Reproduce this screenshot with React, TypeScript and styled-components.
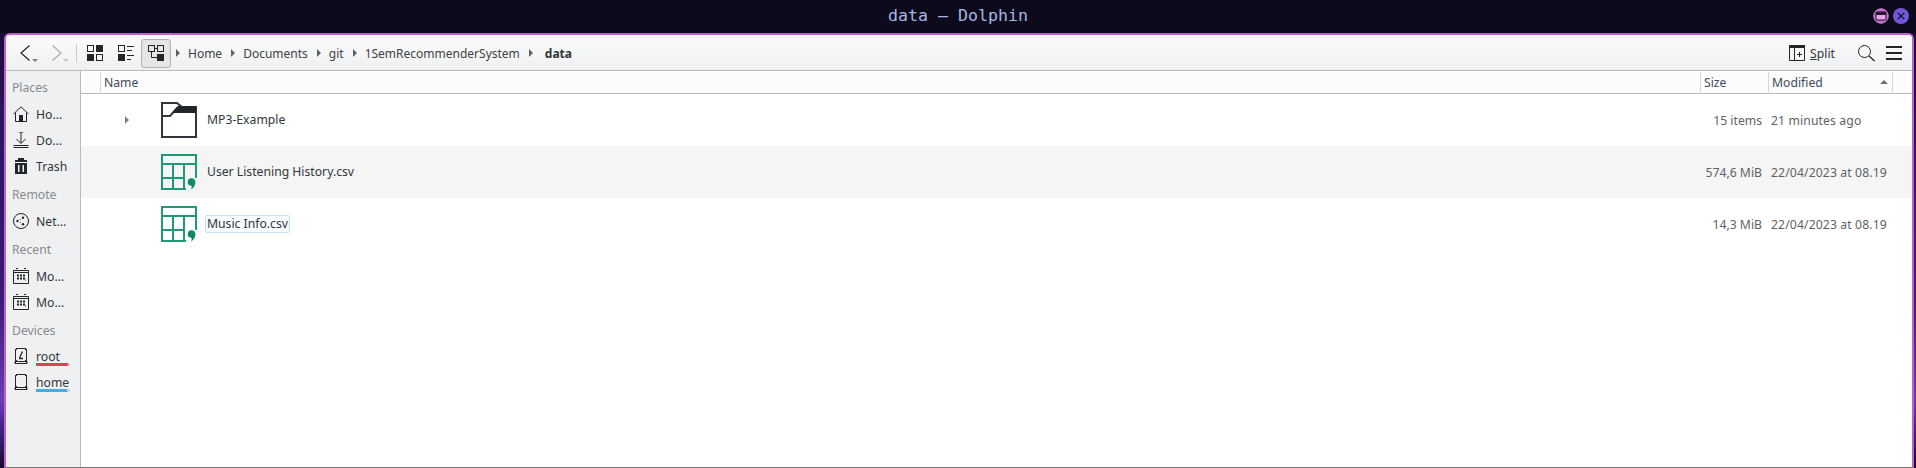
import React from "react";
import styled, { createGlobalStyle } from "styled-components";

const Global = createGlobalStyle`
  html, body { margin: 0; padding: 0; height: 468px; overflow: hidden; background: #0d0a1c; }
  #root { height: 468px; }
  * { box-sizing: border-box; }
`;

const Desktop = styled.div`
  width: 1916px; height: 468px; display: flex; flex-direction: column;
  background: linear-gradient(#1c0d3a 33px, #2c1460 120px, #3a1a78 300px, #6a3fb0 400px, #45258c 425px, #1a0a30 468px);
  font-family: "Noto Sans", sans-serif; font-size: 12.2px; color: #232629;
`;
const TitleBar = styled.header`
  height: 33px; flex: none; display: flex; align-items: center; justify-content: center; position: relative;
  background: #0d0a1c; color: #a9b6e0; font-family: "DejaVu Sans Mono", monospace; font-size: 16.6px; padding-bottom: 3px;
`;
const TitleButtons = styled.div`
  position: absolute; right: 7px; top: 8px; display: flex; gap: 4px;
`;
const Frame = styled.div`
  flex: 1; min-height: 0; margin: 0 2px 0 4px; display: flex; flex-direction: column;
  background: #eff0f1; border: 2px solid #c061cb; border-bottom: 1px solid #777; border-radius: 6px 6px 0 0;
  overflow: hidden;
`;
const Toolbar = styled.div`
  height: 36px; flex: none; display: flex; align-items: center; padding: 1px 0 0 12px;
  background: linear-gradient(#fcfcfc, #eff0f1); border-bottom: 1px solid #b8babb;
`;
const NavBtn = styled.div<{ $w: number }>`
  width: ${(p) => p.$w}px; height: 28px; flex: none; display: flex; align-items: center; padding-left: 2px;
`;
const IconBtn = styled.div<{ $w?: number; $active?: boolean }>`
  width: ${(p) => p.$w ?? 30}px; height: ${(p) => (p.$active ? 29 : 28)}px; flex: none; display: flex; align-items: center; justify-content: center;
  border-radius: 3px;
  ${(p) => p.$active && "background:#e3e5e6;border:1px solid #b0b2b3;"}
`;
const Separator = styled.div`
  width: 1px; height: 18px; background: #c8cacb; margin-right: 2px; flex: none;
`;
const Crumbs = styled.nav`
  display: flex; align-items: center; flex: 1; padding-left: 5px; font-size: 12px;
`;
const Crumb = styled.span<{ $bold?: boolean }>`
  margin-right: 9px;
  font-weight: ${(p) => (p.$bold ? 700 : 400)}; color: ${(p) => (p.$bold ? "#31363b" : "#3f4347")};
`;
const Arrow = styled.span<{ $gap?: number }>`
  width: 0; height: 0; border-left: 4px solid #5c6063; border-top: 4px solid transparent; border-bottom: 4px solid transparent;
  margin-right: ${(p) => p.$gap ?? 8}px; flex: none;
`;
const Tools = styled.div`
  display: flex; align-items: center;
`;
const SplitBtn = styled.div`
  display: flex; align-items: center; gap: 5px; margin-right: 21px; color: #31363b;
`;
const Body = styled.div`
  flex: 1; min-height: 0; display: flex;
`;
const Sidebar = styled.aside`
  width: 75px; flex: none; background: #eff0f1; border-right: 1px solid #b8babb; padding-top: 8px;
`;
const SectionLabel = styled.div<{ $mt?: number; $mb?: number }>`
  height: 18px; line-height: 18px; padding-left: 6px; color: #868a8e;
  margin-top: ${(p) => p.$mt ?? 0}px; margin-bottom: ${(p) => p.$mb ?? 4}px;
`;
const Place = styled.div`
  height: 26px; display: flex; align-items: center; gap: 7px; padding-left: 7px; color: #31363b; position: relative;
`;
const Usage = styled.div`
  position: absolute; left: 30px; top: 20px; width: 34px; height: 3px; background: #d0d2d4;
`;
const UsageFill = styled.div<{ $c: string; $w: number }>`
  height: 3px; width: ${(p) => p.$w}px; background: ${(p) => p.$c};
`;
const Main = styled.main`
  flex: 1; min-width: 0; background: #fff; display: flex; flex-direction: column;
`;
const HeaderRow = styled.div`
  height: 22px; flex: none; display: grid; grid-template-columns: 20px 1fr 68px 124px 19px;
  background: #fcfcfc; border-bottom: 1px solid #b8babb; margin-top: 1px;
`;
const HeaderCell = styled.div`
  padding-left: 3px; line-height: 22px; border-right: 1px solid #d6d8d9; color: #3d4a5c; position: relative;
  &:last-child { border-right: none; }
`;
const SortMark = styled.span`
  position: absolute; right: 4px; top: 8px; width: 0; height: 0;
  border-left: 4px solid transparent; border-right: 4px solid transparent; border-bottom: 4px solid #6a6e71;
`;
const Row = styled.div<{ $alt?: boolean }>`
  height: 52px; flex: none; display: grid; grid-template-columns: 20px 1fr 68px 124px 19px; align-items: center; position: relative;
  background: ${(p) => (p.$alt ? "#f5f5f5" : "#fff")};
`;
const Expand = styled.span`
  position: absolute; left: 44px; top: 22px; width: 0; height: 0;
  border-left: 4px solid #7f8285; border-top: 4px solid transparent; border-bottom: 4px solid transparent;
`;
const NameCell = styled.div`
  grid-column: 2; display: flex; align-items: center; gap: 8px; padding-left: 60px; color: #31363b;
`;
const FileName = styled.span<{ $focus?: boolean }>`
  padding: 0 1px; border: 1px solid ${(p) => (p.$focus ? "#c3e0f3" : "transparent")}; border-radius: 2px; line-height: 16px;
  background: ${(p) => (p.$focus ? "#f6fbfe" : "transparent")};
`;
const SizeCell = styled.div`
  text-align: right; padding-right: 7px; color: #5f6265; margin-left: -60px;
`;
const DateCell = styled.div`
  padding-left: 2px; color: #5f6265; white-space: nowrap; letter-spacing: 0.12px;
`;

const S = { fill: "none", stroke: "#232629", strokeWidth: 1 } as const;

const Back = () => (
  <svg width="18" height="20" viewBox="0 0 18 20">
    <path d="M9.5 2.500L1 10l8.500 7.500" fill="none" stroke="#232629" strokeWidth="1.2" />
    <path d="M12 16h6l-3 3z" fill="#7f8285" />
  </svg>
);
const Forward = () => (
  <svg width="18" height="20" viewBox="0 0 18 20">
    <path d="M.5 2.500L9 10 .5 17.500" fill="none" stroke="#a8aaac" strokeWidth="1.2" />
    <path d="M11 16h6l-3 3z" fill="#c4c6c8" />
  </svg>
);
const Icons = () => (
  <svg width="16" height="16" viewBox="0 0 16 16">
    <rect x=".5" y=".5" width="6" height="6" {...S} />
    <rect x="9" y="0" width="7" height="7" fill="#232629" />
    <rect x="0" y="9" width="7" height="7" fill="#232629" />
    <rect x="9.5" y="9.5" width="6" height="6" {...S} />
  </svg>
);
const Compact = () => (
  <svg width="16" height="16" viewBox="0 0 16 16">
    <rect x=".5" y=".5" width="6" height="6" {...S} />
    <rect x="0" y="9" width="7" height="7" fill="#232629" />
    <path d="M9 1.500h7M9 5.500h5M9 10.500h7M9 14.500h4" {...S} />
  </svg>
);
const Tree = () => (
  <svg width="16" height="16" viewBox="0 0 16 16">
    <rect x=".5" y=".5" width="6" height="6" {...S} />
    <rect x="9.5" y=".5" width="6" height="6" {...S} />
    <rect x="9" y="9" width="7" height="7" fill="#232629" />
    <path d="M3.500 7v5.500H9M7 3.500h2" {...S} />
  </svg>
);
const SplitIcon = () => (
  <svg width="16" height="16" viewBox="0 0 16 16">
    <path d="M0 0h16v3H0z" fill="#232629" />
    <path d="M.5 3v12.500h15V3M5.500 3v12.500M8 9.500h5M10.500 7v5" {...S} />
  </svg>
);
const Search = () => (
  <svg width="17" height="17" viewBox="0 0 17 17">
    <circle cx="6.5" cy="6.5" r="6" {...S} />
    <path d="M11 11l5.500 5" {...S} strokeWidth="1.4" />
  </svg>
);
const Burger = () => (
  <svg width="16" height="14" viewBox="0 0 16 14">
    <path d="M0 0h16v2H0zM0 6h16v2H0zM0 12h16v2H0z" fill="#232629" />
  </svg>
);
const Home = () => (
  <svg width="16" height="16" viewBox="0 0 16 16">
    <path d="M.5 8L8 .8 15.500 8M2.500 6.500v9h11v-9" {...S} />
    <rect x="6" y="9" width="4" height="6.5" fill="#232629" />
  </svg>
);
const Download = () => (
  <svg width="16" height="16" viewBox="0 0 16 16">
    <path d="M8 0v11M3.500 7L8 11.500 12.500 7M5.500 0h5M.5 13.500h15" {...S} />
    <path d="M.5 15.500h15" {...S} />
  </svg>
);
const Trash = () => (
  <svg width="16" height="16" viewBox="0 0 16 16">
    <path d="M2 2h12v2H2zM5 0h6v2H5z" fill="#232629" />
    <path fillRule="evenodd" d="M2 5h12v11H2zM5 7v7h1.500V7zM9.500 7v7H11V7z" fill="#232629" />
  </svg>
);
const Network = () => (
  <svg width="16" height="16" viewBox="0 0 16 16">
    <circle cx="8" cy="8" r="7.5" {...S} />
    <circle cx="4.5" cy="8" r="1.2" fill="#232629" />
    <circle cx="10" cy="4.8" r="1.2" fill="#232629" />
    <circle cx="10" cy="11.2" r="1.2" fill="#232629" />
    <circle cx="7.2" cy="6.6" r=".5" fill="#232629" />
    <circle cx="7.2" cy="9.4" r=".5" fill="#232629" />
  </svg>
);
const Calendar = () => (
  <svg width="16" height="16" viewBox="0 0 16 16">
    <path d="M.5 2.500h15v13H.5zM.5 4.500h15M3 .5h2M11 .5h2" {...S} />
    <path d="M4 7h2v2H4zM7 7h2v2H7zM10 7h2v2h-2zM4 10h2v2H4zM7 10h2v2H7zM10 10h2v2h-2zM12 12h1v1h-1z" fill="#232629" transform="translate(0 -.5)" />
  </svg>
);
const Disk = ({ slash }: { slash?: boolean }) => (
  <svg width="16" height="16" viewBox="0 0 16 16">
    <path d="M3 .5h10M2.500 1v14M13.500 1v14M2 13.500h12v2H2z" fill="none" stroke="#232629" />
    <path d="M2 1h2v1H2zM12 1h2v1h-2zM2 12h2v1H2zM12 12h2v1h-2z" fill="#232629" />
    {slash && <path d="M9.500 3.500L6.500 10M6 10.500h4" fill="none" stroke="#232629" strokeWidth="1.3" />}
  </svg>
);
const Folder = () => (
  <svg width="36" height="36" viewBox="0 0 36 36">
    <path d="M1 1h15l5 4h14v30H1z" fill="none" stroke="#31363b" strokeWidth="2" />
    <path d="M1 14h8l8-9" fill="none" stroke="#31363b" strokeWidth="2" />
    <path d="M17 4h18v7H11z" fill="#232629" />
  </svg>
);
const Csv = () => (
  <svg width="36" height="36" viewBox="0 0 36 36">
    <path d="M35 24V1H1v34h24" fill="none" stroke="#1e9b75" strokeWidth="2" />
    <path d="M1 10h34M1 24h23M12 10v25M23 10v25" fill="none" stroke="#1e9b75" strokeWidth="2" />
    <circle cx="30.5" cy="28" r="3.8" fill="#0f8a66" />
    <path d="M34.300 28c0 3.500-1.500 6-4.500 7.500 1-1.500 1.200-3 .5-4z" fill="#0f8a66" />
  </svg>
);
const Maximize = () => (
  <svg width="16" height="16" viewBox="0 0 16 16">
    <circle cx="8" cy="8" r="7.2" fill="#c061cb" stroke="#d98fe0" />
    <path d="M3 4h10v8H3z" fill="#e6a6ea" stroke="#2a1630" strokeWidth="1" />
    <path d="M3 4h10v3H3z" fill="#2a1630" />
  </svg>
);
const Close = () => (
  <svg width="16" height="16" viewBox="0 0 16 16">
    <circle cx="8" cy="8" r="8" fill="#7058d8" />
    <path d="M4.800 4.800l6.400 6.400M11.200 4.800l-6.400 6.400" stroke="#0d0a1c" strokeWidth="1.2" />
  </svg>
);

const crumbs = ["Home", "Documents", "git", "1SemRecommenderSystem"];

export default function App() {
  return (
    <>
      <Global />
      <Desktop>
        <TitleBar>
          data — Dolphin
          <TitleButtons>
            <Maximize />
            <Close />
          </TitleButtons>
        </TitleBar>
        <Frame>
          <Toolbar>
            <NavBtn $w={32}><Back /></NavBtn>
            <NavBtn $w={26}><Forward /></NavBtn>
            <Separator />
            <IconBtn $w={31}><Icons /></IconBtn>
            <IconBtn $w={31}><Compact /></IconBtn>
            <IconBtn $active><Tree /></IconBtn>
            <Crumbs>
              {crumbs.map((c) => (
                <React.Fragment key={c}>
                  <Arrow />
                  <Crumb>{c}</Crumb>
                </React.Fragment>
              ))}
              <Arrow $gap={12} />
              <Crumb $bold>data</Crumb>
            </Crumbs>
            <Tools>
              <SplitBtn><SplitIcon /><span><u>S</u>plit</span></SplitBtn>
              <IconBtn $w={20}><Search /></IconBtn>
              <IconBtn $w={36}><Burger /></IconBtn>
            </Tools>
          </Toolbar>
          <Body>
            <Sidebar>
              <SectionLabel>Places</SectionLabel>
              <Place><Home />Ho...</Place>
              <Place><Download />Do...</Place>
              <Place><Trash />Trash</Place>
              <SectionLabel $mt={7}>Remote</SectionLabel>
              <Place><Network />Net...</Place>
              <SectionLabel $mt={7}>Recent</SectionLabel>
              <Place><Calendar />Mo...</Place>
              <Place><Calendar />Mo...</Place>
              <SectionLabel $mt={7} $mb={3}>Devices</SectionLabel>
              <Place><Disk slash />root<Usage><UsageFill $c="#da4453" $w={32} /></Usage></Place>
              <Place><Disk />home<Usage><UsageFill $c="#3daee9" $w={31} /></Usage></Place>
            </Sidebar>
            <Main>
              <HeaderRow>
                <HeaderCell />
                <HeaderCell>Name</HeaderCell>
                <HeaderCell>Size</HeaderCell>
                <HeaderCell>Modified<SortMark /></HeaderCell>
                <HeaderCell />
              </HeaderRow>
              <Row>
                <Expand />
                <NameCell><Folder /><FileName>MP3-Example</FileName></NameCell>
                <SizeCell>15 items</SizeCell>
                <DateCell>21 minutes ago</DateCell>
              </Row>
              <Row $alt>
                <NameCell><Csv /><FileName>User Listening History.csv</FileName></NameCell>
                <SizeCell>574,6 MiB</SizeCell>
                <DateCell>22/04/2023 at 08.19</DateCell>
              </Row>
              <Row>
                <NameCell><Csv /><FileName $focus>Music Info.csv</FileName></NameCell>
                <SizeCell>14,3 MiB</SizeCell>
                <DateCell>22/04/2023 at 08.19</DateCell>
              </Row>
            </Main>
          </Body>
        </Frame>
      </Desktop>
    </>
  );
}
